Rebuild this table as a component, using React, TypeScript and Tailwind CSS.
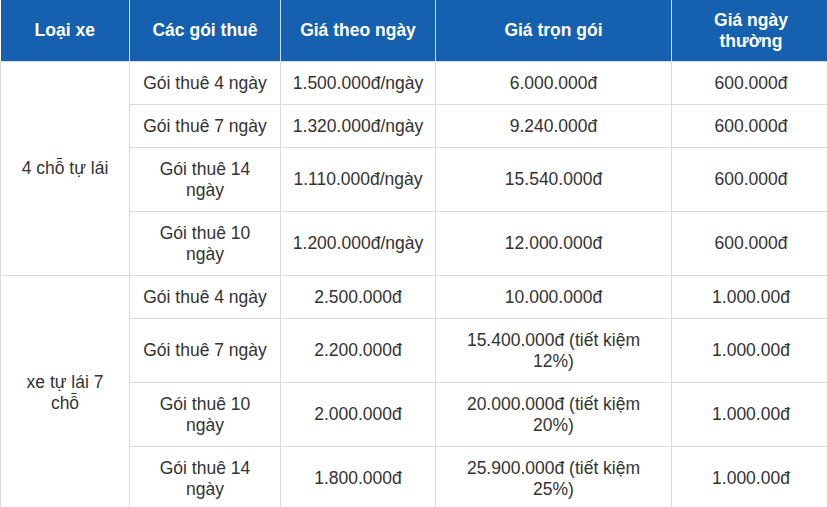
const headers = ['Loại xe', 'Các gói thuê', 'Giá theo ngày', 'Giá trọn gói', 'Giá ngày thường'];

type Row = { pkg: string; daily: string; total: string; weekday: string };

const groups: { name: string; rows: Row[] }[] = [
  {
    name: '4 chỗ tự lái',
    rows: [
      { pkg: 'Gói thuê 4 ngày', daily: '1.500.000đ/ngày', total: '6.000.000đ', weekday: '600.000đ' },
      { pkg: 'Gói thuê 7 ngày', daily: '1.320.000đ/ngày', total: '9.240.000đ', weekday: '600.000đ' },
      { pkg: 'Gói thuê 14 ngày', daily: '1.110.000đ/ngày', total: '15.540.000đ', weekday: '600.000đ' },
      { pkg: 'Gói thuê 10 ngày', daily: '1.200.000đ/ngày', total: '12.000.000đ', weekday: '600.000đ' },
    ],
  },
  {
    name: 'xe tự lái 7 chỗ',
    rows: [
      { pkg: 'Gói thuê 4 ngày', daily: '2.500.000đ', total: '10.000.000đ', weekday: '1.000.00đ' },
      { pkg: 'Gói thuê 7 ngày', daily: '2.200.000đ', total: '15.400.000đ (tiết kiệm 12%)', weekday: '1.000.00đ' },
      { pkg: 'Gói thuê 10 ngày', daily: '2.000.000đ', total: '20.000.000đ (tiết kiệm 20%)', weekday: '1.000.00đ' },
      { pkg: 'Gói thuê 14 ngày', daily: '1.800.000đ', total: '25.900.000đ (tiết kiệm 25%)', weekday: '1.000.00đ' },
    ],
  },
];

const cell = 'border border-[#dcdcdc] px-[10px] py-[10.5px] text-center align-middle leading-[21px]';

export default function App() {
  return (
    <div className="w-[827px] h-[507px] overflow-hidden bg-white" style={{ fontFamily: '"Liberation Sans", Arial, sans-serif' }}>
      <table className="w-[830px] table-fixed border-collapse text-[17.5px] text-[#333]">
        <colgroup>
          <col className="w-[129px]" />
          <col className="w-[151px]" />
          <col className="w-[155px]" />
          <col className="w-[236px]" />
          <col className="w-[159px]" />
        </colgroup>
        <thead>
          <tr className="bg-[#1660b0]">
            {headers.map((h) => (
              <th
                key={h}
                className="border-x border-[#cfdcee] first:border-l-0 px-[12px] py-[9.5px] text-center align-middle font-bold leading-[21px] text-white"
              >
                {h}
              </th>
            ))}
          </tr>
        </thead>
        <tbody>
          {groups.map((g) =>
            g.rows.map((r, i) => (
              <tr key={g.name + r.pkg}>
                {i === 0 && (
                  <td rowSpan={g.rows.length} className={cell}>
                    {g.name}
                  </td>
                )}
                <td className={cell}>{r.pkg}</td>
                <td className={cell}>{r.daily}</td>
                <td className={cell}>{r.total}</td>
                <td className={cell}>{r.weekday}</td>
              </tr>
            ))
          )}
        </tbody>
      </table>
    </div>
  );
}
